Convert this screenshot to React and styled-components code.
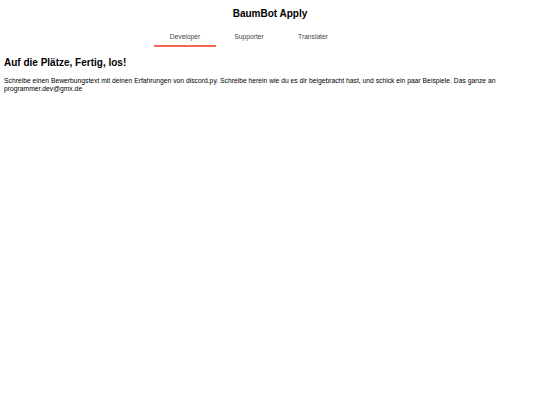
import styled, { createGlobalStyle } from 'styled-components';
import { useState } from 'react';

const GlobalStyle = createGlobalStyle`
  body {
    margin: 0;
    background: #fff;
    font-family: "Liberation Sans", Arial, sans-serif;
    color: #000;
  }
`;

const tabs = ['Developer', 'Supporter', 'Translater'];

function App() {
  const [active, setActive] = useState(0);
  return (
    <>
      <GlobalStyle />
      <Page>
        <Title>BaumBot Apply</Title>
        <TabBar>
          {tabs.map((t, i) => (
            <Tab key={t} $active={i === active} onClick={() => setActive(i)}>
              {t}
            </Tab>
          ))}
        </TabBar>
        <Content>
          <Heading>Auf die Plätze, Fertig, los!</Heading>
          <BodyText>
            Schreibe einen Bewerbungstext mit deinen Erfahrungen von discord.py. Schreibe herein wie du es dir
            beigebracht hast, und schick ein paar Beispiele. Das ganze an programmer.dev@gmx.de
          </BodyText>
        </Content>
      </Page>
    </>
  );
}
export default App;

const Page = styled.div`
  display: flex;
  flex-direction: column;
`;
const Title = styled.h1`
  margin: 7px 0 0 0;
  font-size: 10px;
  font-weight: bold;
  text-align: center;
  line-height: 14px;
`;
const TabBar = styled.div`
  display: flex;
  padding-left: 154px;
  margin-top: 8px;
`;
const Tab = styled.div`
  width: 62px;
  height: 18px;
  box-sizing: border-box;
  padding-top: 4px;
  margin-right: 2px;
  font-size: 6.7px;
  line-height: 8px;
  color: #444;
  text-align: center;
  cursor: pointer;
  border-bottom: 2px solid ${(p) => (p.$active ? '#f26a52' : 'transparent')};
`;
const Content = styled.div`
  padding: 0 4px;
`;
const Heading = styled.h2`
  margin: 9px 0 0 0;
  font-size: 10px;
  font-weight: bold;
  line-height: 14px;
`;
const BodyText = styled.p`
  margin: 7px 0 0 0;
  font-size: 6.75px;
  line-height: 8px;
`;
